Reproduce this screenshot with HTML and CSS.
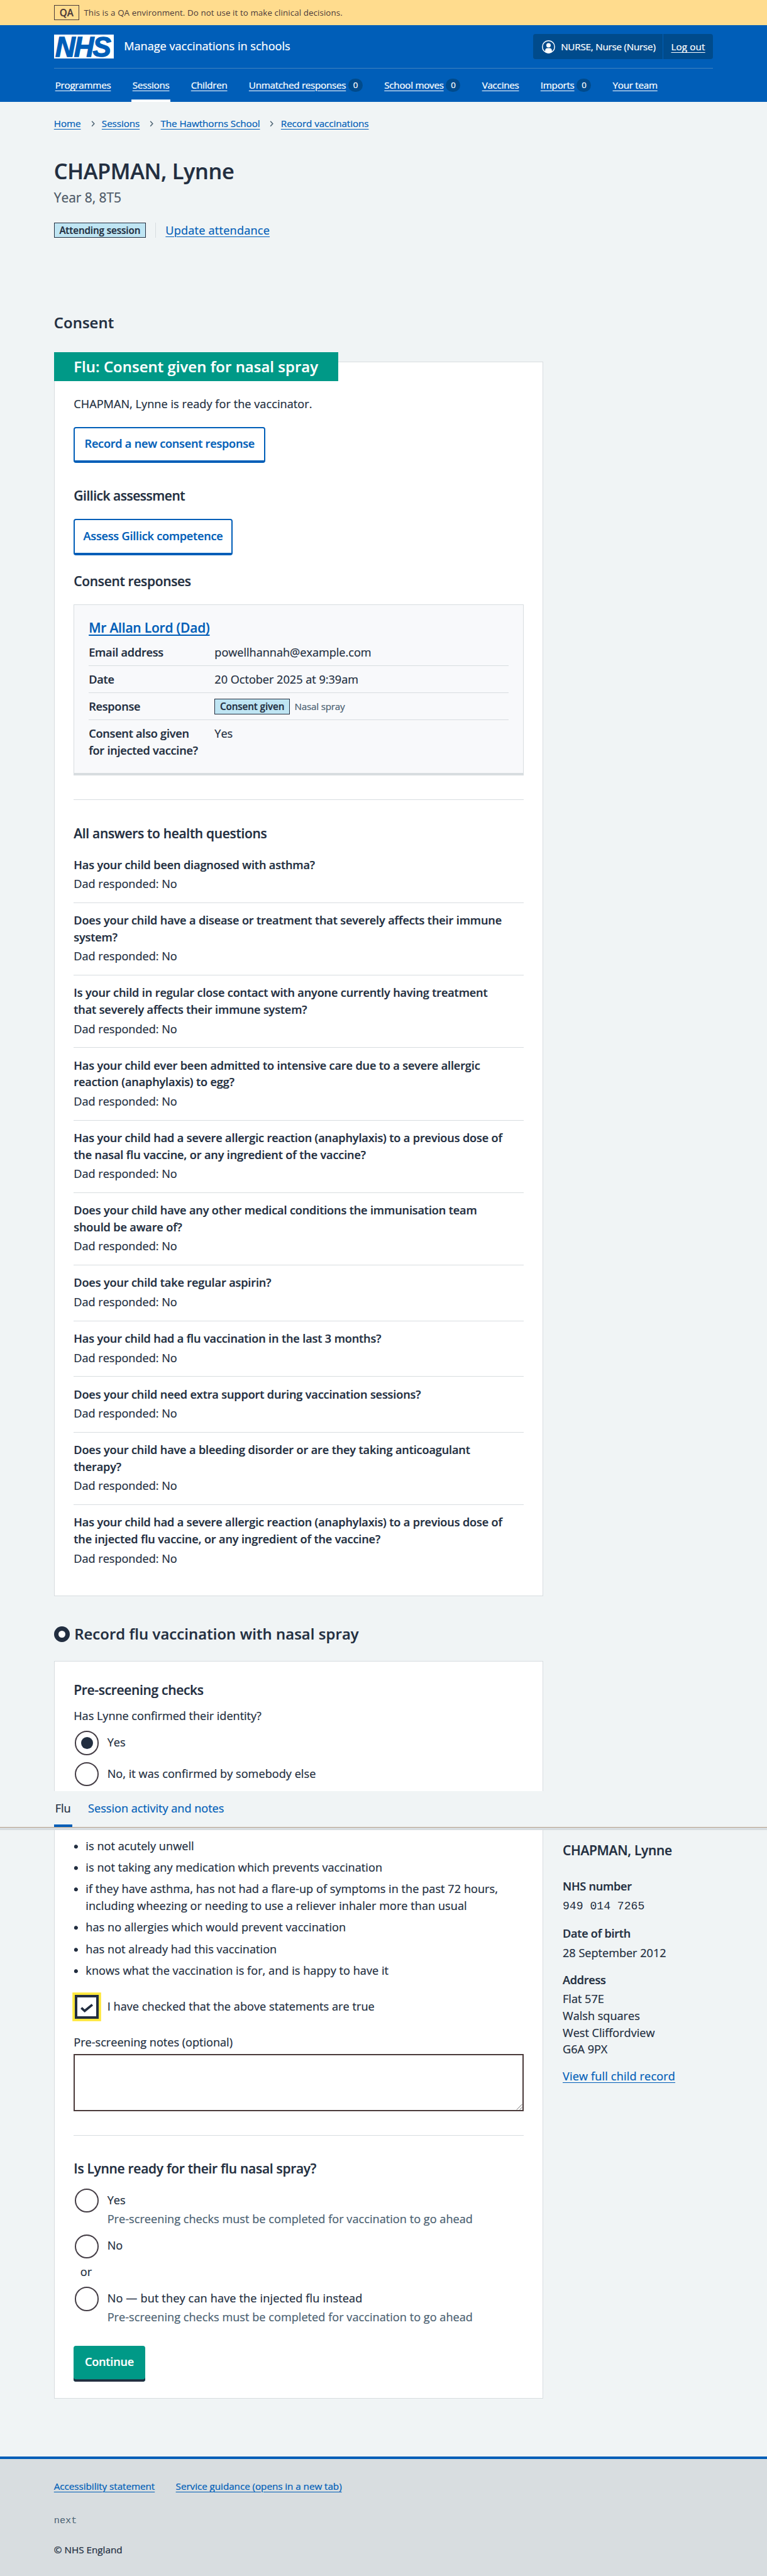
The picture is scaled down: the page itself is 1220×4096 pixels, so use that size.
FILE: index.html
```html
<!DOCTYPE html>
<html lang="en">
<head>
<meta charset="utf-8">
<title>CHAPMAN, Lynne – Manage vaccinations in schools</title>
<link rel="stylesheet" href="styles.css">
</head>
<body>
<div class="environment">
  <div class="container environment-row"><strong class="environment-tag">QA</strong><span class="environment-text">This is a QA environment. Do not use it to make clinical decisions.</span></div>
</div>
<header class="header">
  <div class="container">
    <div class="header-top">
      <span class="logo">NHS</span>
      <span class="service-name">Manage vaccinations in schools</span>
      <div class="account">
        <div class="account-user">
          <svg class="account-icon" viewBox="0 0 22 22" width="22" height="22"><circle cx="11" cy="11" r="10.2" fill="none" stroke="#fff" stroke-width="1.5"/><circle cx="11" cy="8.4" r="3.7" fill="#fff"/><path d="M5.4 20v-2.6a4.3 4.3 0 0 1 4.3-4.3h2.6a4.3 4.3 0 0 1 4.3 4.3V20a11 11 0 0 1-11.2 0z" fill="#fff"/></svg>
          <span class="account-name">NURSE, Nurse (Nurse)</span>
        </div>
        <a class="account-logout" href="#">Log out</a>
      </div>
    </div>
    <nav class="nav">
      <a class="nav-item" href="#"><u>Programmes</u></a>
      <a class="nav-item nav-current" href="#"><u>Sessions</u></a>
      <a class="nav-item" href="#"><u>Children</u></a>
      <a class="nav-item" href="#"><u>Unmatched responses</u><span class="count">0</span></a>
      <a class="nav-item" href="#"><u>School moves</u><span class="count">0</span></a>
      <a class="nav-item" href="#"><u>Vaccines</u></a>
      <a class="nav-item" href="#"><u>Imports</u><span class="count">0</span></a>
      <a class="nav-item" href="#"><u>Your team</u></a>
    </nav>
  </div>
</header>
<main>
  <div class="container">
    <nav class="breadcrumb">
      <a href="#">Home</a><svg class="chevron" viewBox="0 0 36 24"><path d="M18.5 8l4 4.3-4 4.3"/></svg><a href="#">Sessions</a><svg class="chevron" viewBox="0 0 36 24"><path d="M18.5 8l4 4.3-4 4.3"/></svg><a href="#">The Hawthorns School</a><svg class="chevron" viewBox="0 0 36 24"><path d="M18.5 8l4 4.3-4 4.3"/></svg><a href="#">Record vaccinations</a>
    </nav>
    <h1 class="title">CHAPMAN, Lynne</h1>
    <p class="caption">Year 8, 8T5</p>
    <div class="attendance"><strong class="tag">Attending session</strong><a class="attendance-link" href="#">Update attendance</a></div>

    <h2 class="section-title consent-title">Consent</h2>
    <section class="card consent-card">
      <h3 class="card-banner">Flu: Consent given for nasal spray</h3>
      <p class="ready">CHAPMAN, Lynne is ready for the vaccinator.</p>
      <button class="button-secondary">Record a new consent response</button>
      <h3 class="heading gillick-heading">Gillick assessment</h3>
      <button class="button-secondary gillick-button">Assess Gillick competence</button>
      <h3 class="heading responses-heading">Consent responses</h3>
      <div class="response">
        <h4 class="heading response-name"><a href="#">Mr Allan Lord (Dad)</a></h4>
        <dl class="summary">
          <div class="summary-row"><dt>Email address</dt><dd>powellhannah@example.com</dd></div>
          <div class="summary-row"><dt>Date</dt><dd>20 October 2025 at 9:39am</dd></div>
          <div class="summary-row"><dt>Response</dt><dd class="summary-status"><strong class="tag">Consent given</strong><span class="method">Nasal spray</span></dd></div>
          <div class="summary-row"><dt>Consent also given<br>for injected vaccine?</dt><dd>Yes</dd></div>
        </dl>
      </div>
      <hr class="rule">
      <h3 class="heading answers-heading">All answers to health questions</h3>
      <dl class="answers">
        <div class="answer"><dt>Has your child been diagnosed with asthma?</dt><dd>Dad responded: No</dd></div>
        <div class="answer"><dt>Does your child have a disease or treatment that severely affects their immune<br>system?</dt><dd>Dad responded: No</dd></div>
        <div class="answer"><dt>Is your child in regular close contact with anyone currently having treatment<br>that severely affects their immune system?</dt><dd>Dad responded: No</dd></div>
        <div class="answer"><dt>Has your child ever been admitted to intensive care due to a severe allergic<br>reaction (anaphylaxis) to egg?</dt><dd>Dad responded: No</dd></div>
        <div class="answer"><dt>Has your child had a severe allergic reaction (anaphylaxis) to a previous dose of<br>the nasal flu vaccine, or any ingredient of the vaccine?</dt><dd>Dad responded: No</dd></div>
        <div class="answer"><dt>Does your child have any other medical conditions the immunisation team<br>should be aware of?</dt><dd>Dad responded: No</dd></div>
        <div class="answer"><dt>Does your child take regular aspirin?</dt><dd>Dad responded: No</dd></div>
        <div class="answer"><dt>Has your child had a flu vaccination in the last 3 months?</dt><dd>Dad responded: No</dd></div>
        <div class="answer"><dt>Does your child need extra support during vaccination sessions?</dt><dd>Dad responded: No</dd></div>
        <div class="answer"><dt>Does your child have a bleeding disorder or are they taking anticoagulant<br>therapy?</dt><dd>Dad responded: No</dd></div>
        <div class="answer"><dt>Has your child had a severe allergic reaction (anaphylaxis) to a previous dose of<br>the injected flu vaccine, or any ingredient of the vaccine?</dt><dd>Dad responded: No</dd></div>
      </dl>
    </section>

    <h2 class="section-title record-title"><span class="ring"></span>Record flu vaccination with nasal spray</h2>
    <section class="card checks-card">
      <h3 class="heading">Pre-screening checks</h3>
      <p class="identity">Has Lynne confirmed their identity?</p>
      <div class="option"><span class="radio radio-checked"></span><label>Yes</label></div>
      <div class="option"><span class="radio"></span><label>No, it was confirmed by somebody else</label></div>
    </section>
  </div>

  <div class="tabs">
    <div class="container tabs-row"><a class="tab tab-current" href="#">Flu</a><a class="tab" href="#">Session activity and notes</a></div>
  </div>

  <div class="container columns">
    <section class="card form-card">
      <ul class="statements">
        <li>is not acutely unwell</li>
        <li>is not taking any medication which prevents vaccination</li>
        <li>if they have asthma, has not had a flare-up of symptoms in the past 72 hours,<br>including wheezing or needing to use a reliever inhaler more than usual</li>
        <li>has no allergies which would prevent vaccination</li>
        <li>has not already had this vaccination</li>
        <li>knows what the vaccination is for, and is happy to have it</li>
      </ul>
      <div class="option"><span class="checkbox"><svg viewBox="0 0 32 32" width="32" height="32"><path d="M6.7 17.4l5.6 5.2L25 12.2" fill="none" stroke="#222e40" stroke-width="4"/></svg></span><label>I have checked that the above statements are true</label></div>
      <p class="notes-label">Pre-screening notes (optional)</p>
      <div class="notes"><svg viewBox="0 0 12 12" width="12" height="12"><path d="M2 11L11 2M7 11l4-4" stroke="#666" fill="none"/></svg></div>
      <hr class="rule">
      <h3 class="heading ready-heading">Is Lynne ready for their flu nasal spray?</h3>
      <div class="option"><span class="radio"></span><label>Yes</label></div>
      <p class="hint">Pre-screening checks must be completed for vaccination to go ahead</p>
      <div class="option"><span class="radio"></span><label>No</label></div>
      <p class="divider">or</p>
      <div class="option"><span class="radio"></span><label class="injected">No — but they can have the injected flu instead</label></div>
      <p class="hint">Pre-screening checks must be completed for vaccination to go ahead</p>
      <button class="button">Continue</button>
    </section>
    <aside class="patient">
      <h3 class="heading patient-name">CHAPMAN, Lynne</h3>
      <p class="patient-label">NHS number</p>
      <p class="patient-number">949 014 7265</p>
      <p class="patient-label">Date of birth</p>
      <p class="patient-value">28 September 2012</p>
      <p class="patient-label">Address</p>
      <p class="patient-value">Flat 57E<br>Walsh squares<br>West Cliffordview<br>G6A 9PX</p>
      <a class="patient-link" href="#">View full child record</a>
    </aside>
  </div>
</main>
<footer class="footer">
  <div class="container">
    <div class="footer-links"><a href="#">Accessibility statement</a><a href="#">Service guidance (opens in a new tab)</a></div>
    <p class="footer-version">next</p>
    <p class="footer-copyright">© NHS England</p>
  </div>
</footer>
</body>
</html>
```
FILE: styles.css
```css
* { box-sizing: border-box; margin: 0; padding: 0; }
html { background: #d8dde0; }
body {
  zoom: 0.953125;
  width: 1280px;
  height: 4298px;
  overflow: hidden;
  background: #f0f4f5;
  color: #222e40;
  font: 400 19px/28px "Open Sans", "Noto Sans", sans-serif;
  -webkit-text-stroke: 0.25px;
}
a { color: #005eb8; text-decoration: underline; text-decoration-thickness: 1px; text-underline-offset: 3px; }
dt, h1, h2, h3, h4, strong { font-weight: 600; }
.container { width: 1100px; margin: 0 auto; }

.environment { background: #ffdc8e; color: #4a3a3a; height: 42px; }
.environment-row { display: flex; align-items: center; height: 42px; gap: 8px; }
.environment-tag { border: 1px solid #4a3a3a; height: 26px; width: 42px; text-align: center; font-size: 16px; line-height: 24px; }
.environment-text { font-size: 14px; letter-spacing: 0.1px; white-space: nowrap; -webkit-text-stroke: 0; }

.header { background: #005eb8; color: #fff; height: 128px; padding-top: 15px; }
.header a { color: #fff; }
.header-top { display: flex; align-items: center; height: 57px; padding-bottom: 14px; border-bottom: 1px solid #4082c0; }
.logo {
  width: 100px; height: 40px; background: #fff; color: #005eb8; text-align: center;
  font: italic 700 46px/41px "Liberation Sans", sans-serif; letter-spacing: -2px; padding-right: 4px;
  -webkit-text-stroke: 1.4px #005eb8;
}
.service-name { margin-left: 17px; padding-bottom: 3px; }
.account { display: flex; margin-left: auto; height: 42px; width: 300px; background: #004b8c; border-radius: 4px; font-size: 16px; line-height: 42px; white-space: nowrap; }
.account-user { display: flex; align-items: center; width: 217px; padding-left: 14px; border-right: 1px solid #005eb8; }
.account-name { margin-left: 10px; letter-spacing: -0.26px; }
.account-logout { margin-left: 13px; letter-spacing: 0.12px; }
.nav { display: flex; gap: 32px; height: 56px; font-size: 16px; letter-spacing: -0.31px; white-space: nowrap; }
.nav-item { display: flex; align-items: center; padding: 0 2px; text-decoration: none; }
.nav-item u { text-decoration-thickness: 1px; text-underline-offset: 3px; }
.nav-current { box-shadow: inset 0 -4px #fff; }
.count { width: 24px; height: 22px; margin-left: 4px; border-radius: 12px; background: #004b8c; font-size: 14px; line-height: 22px; text-align: center; }

.breadcrumb { display: flex; height: 24px; margin-top: 24px; font-size: 16px; line-height: 24px; letter-spacing: -0.1px; white-space: nowrap; }
.chevron { width: 35px; height: 24px; fill: none; stroke: #4c6272; stroke-width: 1.6; }
.title { margin-top: 45px; font-size: 36px; line-height: 44px; letter-spacing: -0.32px; }
.caption { margin-top: 7px; font-size: 22px; line-height: 32px; color: #4c5866; letter-spacing: -0.04px; }
.attendance { display: flex; height: 26px; margin-top: 25px; line-height: 26px; }
.tag { height: 26px; padding: 0 8px; border: 1px solid #222e40; background: #bfe5f3; font-size: 16px; line-height: 24px; letter-spacing: -0.12px; white-space: nowrap; }
.attendance-link { margin-left: 16px; padding-left: 16px; border-left: 1px solid #d8dde0; letter-spacing: 0.23px; }

.section-title { font-size: 25px; line-height: 32px; letter-spacing: 0.12px; }
.consent-title { margin-top: 126px; }
.heading { font-size: 22px; line-height: 32px; letter-spacing: -0.32px; }
.card { width: 817px; background: #fff; border: 1px solid #d8dde0; padding: 0 32px; }
.consent-card { margin-top: 48px; padding-bottom: 48px; }
.card-banner { width: 474px; height: 48px; margin: -16px 0 0 -33px; padding-left: 33px; background: #009987; color: #fff; font-size: 25px; line-height: 49px; letter-spacing: 0.1px; white-space: nowrap; }
.ready { margin: 23.4px 0 24.6px; letter-spacing: 0.06px; }
.button-secondary {
  display: block; width: 320px; height: 60px; border: 2.1px solid #005eb8; border-bottom-width: 4.2px; border-radius: 4px;
  background: #fff; color: #005eb8; font: 600 19px/52px "Open Sans", "Noto Sans", sans-serif; letter-spacing: -0.22px; white-space: nowrap;
}
.gillick-heading { margin: 39px 0 23px; letter-spacing: -0.48px; }
.gillick-button { width: 265px; }
.responses-heading { margin: 27.5px 0 22.5px; }
.response { height: 286px; padding: 22.5px 24px 0; border: 1px solid #d8dde0; border-bottom-width: 4.2px; background: #f8f9fb; }
.response-name { margin-bottom: 3px; letter-spacing: -0.19px; }
.response-name a { text-decoration-thickness: 2.1px; }
.summary-row { display: flex; height: 45px; padding-top: 8px; border-bottom: 1px solid #d8dde0; }
.summary-row:last-child { height: 64px; border: 0; }
.summary-row dt { width: 210px; letter-spacing: -0.22px; white-space: nowrap; }
.summary-status { display: flex; align-items: center; height: 28px; }
.method { margin-left: 8px; color: #4c6272; font-size: 16px; letter-spacing: -0.25px; }
.rule { height: 1px; margin-top: 40px; border: 0; background: #d8dde0; }
.answers-heading { margin: 39px 0 22.5px; }
.answer { padding-bottom: 16.9px; margin-bottom: 15px; border-bottom: 1px solid #d8dde0; white-space: nowrap; }
.answer:last-child { padding: 0; margin: 0; border: 0; }
.answer dt { margin-bottom: 4px; letter-spacing: -0.13px; }

.record-title { display: flex; align-items: center; margin: 47.5px 0 28.5px; }
.ring { width: 26px; height: 26px; margin-right: 8px; border: 7.4px solid #222e40; border-radius: 50%; background: #fff; }
.checks-card { height: 217px; padding-top: 31px; border-bottom: 0; }
.identity { margin: 14px 0 10.9px; letter-spacing: -0.02px; }
.option { display: flex; align-items: center; height: 40px; margin-left: 2px; }
.option + .option { margin-top: 12px; }
.option label { margin-left: 14px; padding-bottom: 2px; letter-spacing: 0.05px; white-space: nowrap; }
.option .injected { letter-spacing: 0.16px; }
.radio { display: grid; place-items: center; width: 40px; height: 40px; border: 2.1px solid #453e46; border-radius: 50%; background: #fff; }
.radio-checked::after { content: ""; width: 20px; height: 20px; border-radius: 50%; background: #222e40; }

.tabs { height: 65px; background: #f0f4f5; border-bottom: 4.2px solid #d8dde0; box-shadow: inset 0 -1px #b9a28d; }
.tabs-row { display: flex; height: 60px; }
.tab { padding: 14.6px 2px 0; margin-right: 24px; text-decoration: none; }
.tab-current { width: 31px; color: #222e40; border-bottom: 4.2px solid #005eb8; }

.columns { display: flex; }
.form-card { height: 949px; padding-top: 12.5px; border-top: 0; }
.statements { list-style: none; margin-bottom: 26.9px; white-space: nowrap; }
.statements li { display: block; padding-left: 20px; margin-bottom: 8px; background: radial-gradient(circle at 4px 15px, #222e40 2.8px, transparent 3.6px); letter-spacing: 0.05px; }
.statements li:last-child { margin-bottom: 0; }
.checkbox { width: 40px; height: 40px; border: 4.2px solid #222e40; background: #fff; box-shadow: 0 0 0 4px #ffe83d; }
.checkbox svg { display: block; }
.notes-label { margin: 24.6px 0 5.4px; }
.notes { display: flex; align-items: flex-end; justify-content: flex-end; height: 96px; border: 2.1px solid #4a3a3a; }
.ready-heading { margin: 38.5px 0 17.5px; letter-spacing: -0.29px; }
.hint { margin: -3.4px 0 11.4px 56px; color: #4c6272; letter-spacing: 0.04px; }
.divider { margin: 8.6px 0 11.4px 11px; }
.button { display: block; width: 119px; height: 60px; margin-top: 33.4px; border: 0; border-radius: 4px; background: #009987; box-shadow: inset 0 -4px #222e40; color: #fff; font: 600 19px/54px "Open Sans", "Noto Sans", sans-serif; letter-spacing: -0.2px; padding-bottom: 6px; }

.patient { margin-left: 32px; padding-top: 18px; }
.patient-name { margin-bottom: 29.5px; letter-spacing: -0.3px; }
.patient-label { margin-top: 17px; font-weight: 600; letter-spacing: -0.25px; }
.patient-name + .patient-label { margin-top: 0; }
.patient-number { margin-top: 6.5px; font-family: "Liberation Mono", monospace; -webkit-text-stroke: 0; }
.patient-value { margin-top: 4px; }
.patient-link { display: block; margin-top: 17px; letter-spacing: 0.17px; }

.footer { height: 200px; margin-top: 96px; border-top: 4.2px solid #005eb8; padding-top: 33.8px; background: #d8dde0; font-size: 16px; line-height: 24px; }
.footer-links { display: flex; gap: 35px; letter-spacing: -0.06px; }
.footer-version { margin-top: 34px; color: #4c6272; font-family: "Liberation Mono", monospace; -webkit-text-stroke: 0; }
.footer-copyright { margin-top: 24px; }
```
